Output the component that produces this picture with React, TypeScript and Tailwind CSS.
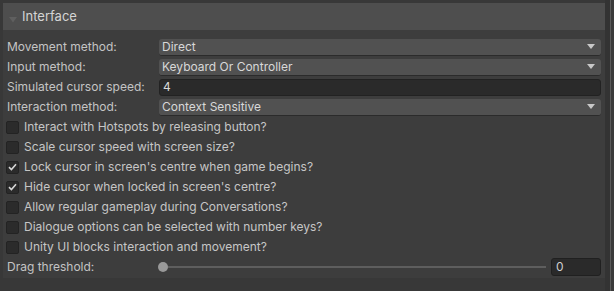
import { ReactNode } from "react";

const font = { fontFamily: "Inter, 'Noto Sans', sans-serif" };

function Arrow() {
  return (
    <svg width="8" height="5" viewBox="0 0 8 5" className="shrink-0">
      <path d="M0 0 L8 0 L4 5 Z" fill="#c8c8c8" />
    </svg>
  );
}

function Row({ label, children }: { label: string; children: ReactNode }) {
  return (
    <div className="flex h-5 items-center">
      <div className="w-[156px] shrink-0 pl-1 text-[12px] text-[#c4c4c4]">{label}</div>
      {children}
    </div>
  );
}

function Dropdown({ value }: { value: string }) {
  return (
    <div className="flex h-[17px] flex-1 items-center justify-between rounded-[3px] border-b border-[#2b2b2b] bg-[#515151] pl-[3px] pr-[6px] text-[12px] text-[#d8d8d8]">
      <span>{value}</span>
      <Arrow />
    </div>
  );
}

function Check({ label, checked }: { label: string; checked?: boolean }) {
  return (
    <div className="flex h-5 items-center pl-[3px]">
      <div className="flex h-[13px] w-[13px] items-center justify-center rounded-[2px] border border-[#232323] bg-[#2b2b2b]">
        {checked && (
          <svg width="9" height="8" viewBox="0 0 9 8">
            <path d="M1 4.2 L3.4 6.5 L8 1.2" stroke="#d6d6d6" strokeWidth="1.6" fill="none" />
          </svg>
        )}
      </div>
      <span className="ml-[5px] text-[12px] text-[#c6c6c6]">{label}</span>
    </div>
  );
}

export default function App() {
  return (
    <div className="flex h-[291px] w-[614px] bg-[#383838]" style={font}>
      <div className="flex flex-1 flex-col pl-[3px] pt-[3px]">
        {/* Header */}
        <div className="flex h-[27px] items-center bg-[#4e4e4e]">
          <svg width="8" height="6" viewBox="0 0 8 6" className="ml-[6px] mt-[7px]">
            <path d="M0 0 L8 0 L4 5.5 Z" fill="#5f5f5f" />
          </svg>
          <span className="ml-[5px] text-[13px] text-[#d4d4d4]">Interface</span>
        </div>

        {/* Body */}
        <div className="flex flex-col bg-[#3d3d3d] pb-[1px] pr-1 pt-[7px]">
          <Row label="Movement method:">
            <Dropdown value="Direct" />
          </Row>
          <Row label="Input method:">
            <Dropdown value="Keyboard Or Controller" />
          </Row>
          <Row label="Simulated cursor speed:">
            <div className="flex h-[17px] flex-1 items-center rounded-[3px] border border-[#222] bg-[#2a2a2a] pl-[3px] text-[12px] text-[#d8d8d8]">
              4
            </div>
          </Row>
          <Row label="Interaction method:">
            <Dropdown value="Context Sensitive" />
          </Row>
          <Check label="Interact with Hotspots by releasing button?" />
          <Check label="Scale cursor speed with screen size?" />
          <Check label="Lock cursor in screen's centre when game begins?" checked />
          <Check label="Hide cursor when locked in screen's centre?" checked />
          <Check label="Allow regular gameplay during Conversations?" />
          <Check label="Dialogue options can be selected with number keys?" />
          <Check label="Unity UI blocks interaction and movement?" />
          <Row label="Drag threshold:">
            <div className="flex flex-1 items-center">
              <div className="flex flex-1 items-center">
                <div className="-ml-[1px] h-[10px] w-[10px] shrink-0 rounded-full bg-[#999]" />
                <div className="h-[2px] flex-1 bg-[#5e5e5e]" />
              </div>
              <div className="ml-[5px] flex h-[18px] w-[50px] items-center rounded-[3px] border border-[#202020] bg-[#2a2a2a] pl-[4px] text-[12px] text-[#d0d0d0]">
                0
              </div>
            </div>
          </Row>
        </div>
      </div>

      {/* Right scroll strip */}
      <div className="flex w-[9px]">
        <div className="w-[5px] bg-[#333333]" />
        <div className="w-[1px] bg-[#5a5a5a]" />
        <div className="flex-1 bg-[#3a3a3a]" />
      </div>
    </div>
  );
}
